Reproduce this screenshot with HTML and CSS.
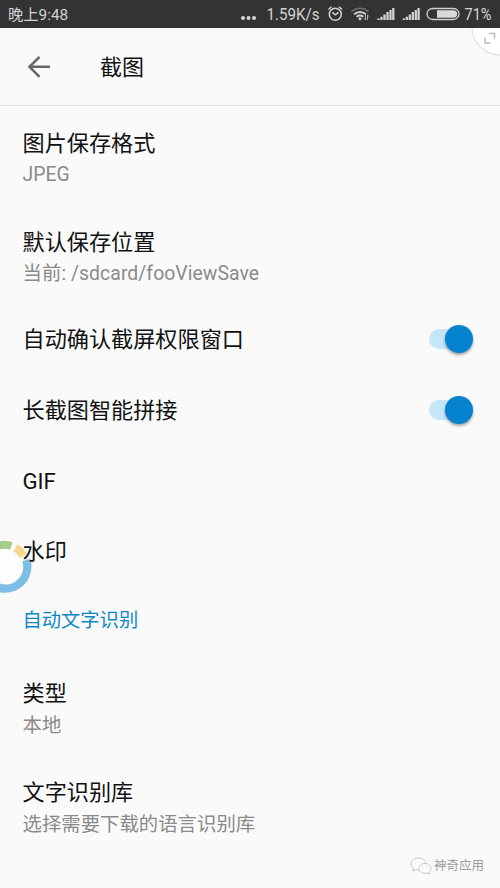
FILE: index.html
```html
<!DOCTYPE html>
<html lang="zh-CN">
<head>
<meta charset="utf-8">
<title>截图</title>
<link rel="stylesheet" href="styles.css">
</head>
<body>
<div class="screen">
  <div class="status">
    <span class="time">晚上9:48</span>
    <svg class="icons" width="270" height="28" viewBox="230 0 270 28" fill="none" stroke="#d2d2d2">
      <g fill="#d8d8d8" stroke="none"><circle cx="243" cy="18" r="2"/><circle cx="248.500" cy="18" r="2"/><circle cx="254" cy="18" r="2"/></g>
      <text class="status-text" x="266.500" y="20" textLength="53" lengthAdjust="spacingAndGlyphs">1.59K/s</text>
      <circle cx="335.300" cy="14.300" r="6" stroke-width="1.500"/>
      <path d="M328.500 9.500l3-2.700M342 9.500l-3-2.700M332.300 12.300l3 2.500 3.200-2.500" stroke-width="1.500"/>
      <path d="M351.500 11.500q8.500-6.500 17 0" stroke="#6c6c6c" stroke-width="1.700"/>
      <path d="M354 14.300q6-4.600 12 0M356.500 16.800q3.500-2.500 7 0" stroke-width="1.900"/>
      <circle cx="360" cy="18.700" r="1.500" fill="#d2d2d2" stroke="none"/>
      <path d="M365.500 15v5m-1.300-1.500 1.300 1.500M367.500 20v-5m1.300 1.500-1.300-1.500" stroke-width=".8"/>
      <g id="signal" stroke-width="2.300"><path d="M378.500 18.500V20M381.500 16.800V20M384.500 14.500V20M387.500 12V20M390.500 10V20M393.300 8V20"/></g>
      <use href="#signal" x="25.300"/>
      <rect x="427" y="8.500" width="32" height="11" rx="5.500" stroke-width="1.300"/>
      <path d="M437 10.300h16.500a3.700 3.700 0 0 1 0 7.400H437z" fill="#d8d8d8" stroke="none"/>
      <text class="status-text" x="464.500" y="20" textLength="27" lengthAdjust="spacingAndGlyphs">71%</text>
    </svg>
  </div>
  <header class="header">
    <svg class="back" width="24" height="24" viewBox="0 0 24 24" fill="none" stroke="#666" stroke-width="2.500"><path d="M23 11.800H2.500M12.500 1.800 2.500 11.800l10 10"/></svg>
    <h1>截图</h1>
  </header>
  <main class="list">
    <div class="row double"><div class="title">图片保存格式</div><div class="sub">JPEG</div></div>
    <div class="row double"><div class="title">默认保存位置</div><div class="sub">当前: /sdcard/fooViewSave</div></div>
    <div class="singles">
      <div class="row"><div class="title">自动确认截屏权限窗口</div><span class="switch"></span></div>
      <div class="row"><div class="title">长截图智能拼接</div><span class="switch"></span></div>
      <div class="row"><div class="title">GIF</div></div>
      <div class="row"><div class="title">水印</div></div>
    </div>
    <div class="section">自动文字识别</div>
    <div class="row double"><div class="title">类型</div><div class="sub lower">本地</div></div>
    <div class="row double"><div class="title">文字识别库</div><div class="sub lower">选择需要下载的语言识别库</div></div>
  </main>
  <svg class="corner" width="30" height="30" viewBox="470 28 30 30" fill="none">
    <circle cx="500" cy="27" r="28" fill="#fff" stroke="#e2e2e2" stroke-width="1.300"/>
    <path d="M489 33.500h5.500v5M485 37.500v5.500h5.500" stroke="#bdbdbd" stroke-width="1.500"/>
  </svg>
  <svg class="ring" width="34" height="56" viewBox="0 538 34 56" fill="none">
    <circle cx="5" cy="566.500" r="22" fill="#fdfdfd"/>
    <path d="M-2 545.800Q5 543.600 11.300 546.100" stroke="#a5cb8d" stroke-width="8"/>
    <path d="M15.300 547.800Q20 550.500 23.300 556" stroke="#f5d88d" stroke-width="8"/>
    <path d="M26.300 560A22 22 0 0 1-2 587.300" stroke="#7dbde3" stroke-width="8.300"/>
  </svg>
  <div class="watermark">
    <svg width="22" height="18" viewBox="0 0 22 18" fill="#fff" stroke="#bcbcbc" stroke-width=".9">
      <path d="M8.500 1C4.300 1 1 3.600 1 7c0 2 1 3.500 2.700 4.600L3 14l2.800-1.400c1 .3 2 .4 3.200.3 4-.2 7-2.800 7-6S12.500 1 8.500 1z"/>
      <path d="M15 6.500c-3.500 0-6 2.100-6 4.900s2.600 4.900 6 4.900c.8 0 1.500-.1 2.200-.3l2.200 1.200-.6-2c1.400-.9 2.200-2.200 2.200-3.800 0-2.800-2.600-4.900-6-4.900z"/>
      <path d="M6 4.800v1M11 4.800v1M13 9.500v1M17.200 9.500v1"/>
    </svg>
    <span>神奇应用</span>
  </div>
</div>
</body>
</html>
```
FILE: styles.css
```css
body {
  margin: 0;
  background: #fafafa;
  font-family: Roboto, "Noto Sans CJK SC", sans-serif;
}

.screen {
  position: relative;
  width: 500px;
  height: 888px;
  overflow: hidden;
  background: #fafafa;
}

.status {
  display: flex;
  justify-content: space-between;
  height: 28px;
  background: #333;
  color: #d4d4d4;
}

.time {
  padding-left: 8px;
  font-size: 15.300px;
  line-height: 30px;
  white-space: nowrap;
}

.status-text {
  fill: #d4d4d4;
  stroke: none;
  font-size: 16px;
}

.header {
  display: flex;
  align-items: center;
  box-sizing: border-box;
  height: 78px;
  padding-left: 27px;
  border-bottom: 1px solid #e6e6e6;
}

.header h1 {
  margin: 2px 0 0 49px;
  font-size: 22px;
  font-weight: 400;
  line-height: 32px;
  color: #111;
}

.list {
  padding-top: 3px;
}

.singles {
  margin-top: -3px;
}

.row {
  display: flex;
  align-items: center;
  justify-content: space-between;
  box-sizing: border-box;
  height: 70.700px;
  padding: 0 27px 0 22.500px;
}

.double {
  flex-direction: column;
  align-items: flex-start;
  justify-content: center;
  height: 99px;
}

.title {
  position: relative;
  z-index: 1;
  font-size: 22.150px;
  line-height: 32px;
  color: #111;
}

.sub {
  font-size: 19.400px;
  line-height: 31px;
  letter-spacing: 0.050px;
  color: #8a8a8a;
}

.sub.lower {
  padding-top: 1px;
  margin-bottom: -1px;
  letter-spacing: 0;
}

.section {
  height: 72.200px;
  padding-left: 22.500px;
  font-size: 19.300px;
  line-height: 67px;
  color: #0f87c5;
}

.switch {
  position: relative;
  width: 44px;
  height: 20px;
  border-radius: 10px;
  background: #c5e6f7;
}

.switch::after {
  content: "";
  position: absolute;
  top: -4px;
  right: 0;
  width: 28px;
  height: 28px;
  border-radius: 50%;
  background: #0583cf;
  box-shadow: 0 2px 3px rgba(0, 0, 0, 0.350);
}

.corner {
  position: absolute;
  top: 28px;
  right: 0;
}

.ring {
  position: absolute;
  top: 538px;
  left: 0;
}

.watermark {
  position: absolute;
  left: 410px;
  top: 856px;
  display: flex;
  align-items: center;
  gap: 2px;
  font-size: 12.500px;
  line-height: 20px;
  color: #999;
  text-shadow: 0 0 1px #fff;
}
```
